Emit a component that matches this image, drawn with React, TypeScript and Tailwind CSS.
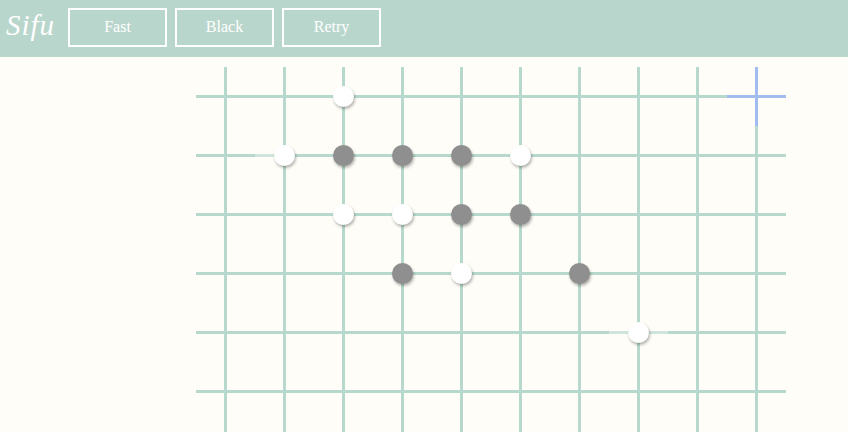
const COLS = 10
const ROWS = 7

// row-col -> stone colour
const stones: Record<string, 'w' | 'b'> = {
  '0-2': 'w',
  '1-1': 'w',
  '1-2': 'b',
  '1-3': 'b',
  '1-4': 'b',
  '1-5': 'w',
  '2-2': 'w',
  '2-3': 'w',
  '2-4': 'b',
  '2-5': 'b',
  '3-3': 'b',
  '3-4': 'w',
  '3-6': 'b',
  '4-7': 'w',
}

const serif = { fontFamily: '"Liberation Serif", "DejaVu Serif", serif' }

const lines = {
  normal: 'bg-[linear-gradient(#b7d8cc,#b7d8cc),linear-gradient(#b7d8cc,#b7d8cc)]',
  faintLeft: 'bg-[linear-gradient(to_right,#cfe4dc_50%,#b7d8cc_50%),linear-gradient(#b7d8cc,#b7d8cc)]',
  faint: 'bg-[linear-gradient(#cfe4dc,#cfe4dc),linear-gradient(#b7d8cc,#b7d8cc)]',
  cursor: 'bg-[linear-gradient(#a3bcf0,#a3bcf0),linear-gradient(#a3bcf0,#a3bcf0)]',
}

function Cell({ row, col }: { row: number; col: number }) {
  const key = `${row}-${col}`
  const stone = stones[key]
  let look = lines.normal
  if (row === 0 && col === 9) look = lines.cursor
  else if (key === '1-1') look = lines.faintLeft
  else if (key === '4-7') look = lines.faint
  return (
    <div
      className={`flex h-[59px] w-[59px] items-center justify-center bg-no-repeat bg-[length:100%_3px,3px_100%] bg-[position:0_28px,28px_0] ${look}`}
    >
      {stone && (
        <div
          className={`h-[21px] w-[21px] rounded-full shadow-[1px_2px_3px_rgba(0,0,0,0.3)] ${
            stone === 'w' ? 'bg-white' : 'bg-[#8f8f8f]'
          }`}
        />
      )}
    </div>
  )
}

export default function App() {
  return (
    <div className="h-[432px] w-[848px] overflow-hidden bg-[#fefdf7]">
      <header className="flex h-[57px] items-center gap-2 bg-[#b9d6cc] pl-[6px]" style={serif}>
        <span className="-mt-[7px] w-[54px] text-[29px] italic leading-none tracking-[1px] text-white">Sifu</span>
        {['Fast', 'Black', 'Retry'].map(label => (
          <button
            key={label}
            className="-mt-[3px] h-[39px] w-[99px] border-2 border-white text-[16px] text-white"
            style={serif}
          >
            {label}
          </button>
        ))}
      </header>
      <main className="pl-[196px] pt-[10px]">
        <div className="grid w-fit grid-cols-[repeat(10,59px)]">
          {Array.from({ length: ROWS * COLS }, (_, i) => (
            <Cell key={i} row={Math.floor(i / COLS)} col={i % COLS} />
          ))}
        </div>
      </main>
    </div>
  )
}
